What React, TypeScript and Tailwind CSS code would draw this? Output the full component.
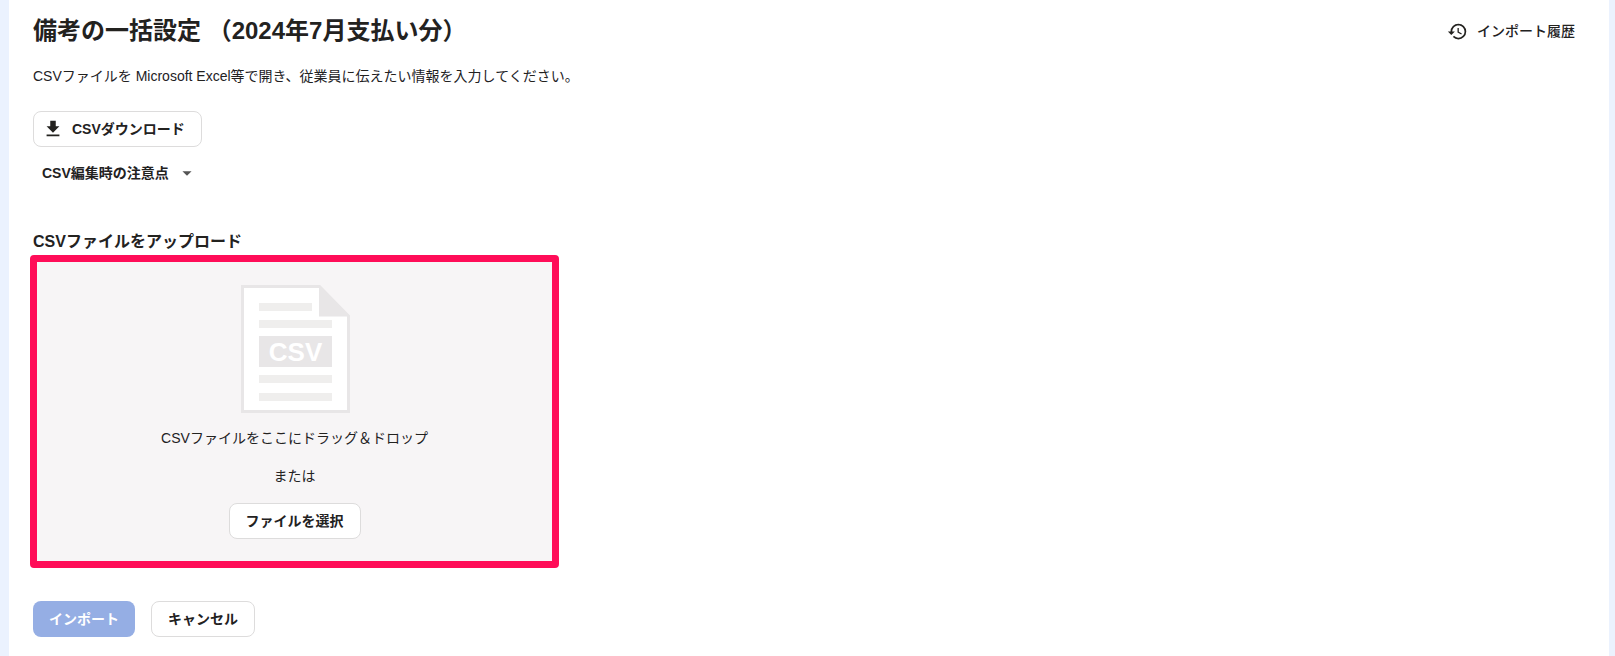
import React from "react";
import { MdHistory, MdFileDownload, MdArrowDropDown } from "react-icons/md";

function CsvIcon() {
  return (
    <svg width="109" height="128" viewBox="0 0 109 128" className="block ml-[2px]">
      <path d="M1.5 1.5H78.5L107.5 31V126.5H1.5Z" fill="#ffffff" stroke="#e8e6e7" strokeWidth="3" />
      <path d="M78 0L109 31.5H78Z" fill="#e8e6e7" />
      <rect x="18" y="18" width="53" height="8" fill="#efeeed" />
      <rect x="18" y="35" width="73" height="8" fill="#efeeed" />
      <rect x="18" y="51" width="73" height="31" fill="#e8e6e7" />
      <text x="54.5" y="76" textAnchor="middle" fontSize="26" fontWeight="700" fill="#ffffff" fontFamily="Liberation Sans, sans-serif">CSV</text>
      <rect x="18" y="90" width="73" height="8" fill="#efeeed" />
      <rect x="18" y="108" width="73" height="8" fill="#efeeed" />
    </svg>
  );
}

export default function App() {
  return (
    <div className="h-[656px] w-full bg-[#ebf2fe] pl-[9px] pr-[6px] overflow-hidden text-[#23221f] [font-family:'Liberation_Sans','Noto_Sans_CJK_JP',sans-serif]">
      <div className="h-full bg-white pl-[24px] pr-[34px]">
        <div className="flex items-center justify-between h-[62px]">
          <h1 className="text-[24px] leading-[32px] font-bold">備考の一括設定 （2024年7月支払い分）</h1>
          <button className="flex items-center gap-[9px] text-[14px] font-medium">
            <MdHistory size={21} />
            <span>インポート履歴</span>
          </button>
        </div>
        <p className="text-[14px] leading-[20px] mt-[4px]">CSVファイルを Microsoft Excel等で開き、従業員に伝えたい情報を入力してください。</p>
        <button className="flex items-center mt-[25px] h-[36px] w-[169px] pl-[8px] bg-white border border-[#dddcdc] rounded-[8px] text-[14px] font-bold">
          <MdFileDownload size={22} />
          <span className="ml-[8px]">CSVダウンロード</span>
        </button>
        <div className="flex items-center mt-[16px] h-[20px] pl-[9px] text-[14px] font-bold">
          <span>CSV編集時の注意点</span>
          <MdArrowDropDown size={22} className="ml-[7px] text-[#555]" />
        </div>
        <h2 className="text-[16px] leading-[20px] font-bold mt-[49px]">CSVファイルをアップロード</h2>
        <div className="mt-[3px] -ml-[3px] w-[529px] h-[313px] border-[7px] border-[#ff0d58] rounded-[4px] bg-[#f7f5f6] flex flex-col items-center pt-[23px]">
          <CsvIcon />
          <p className="text-[14px] leading-[20px] mt-[15px]">CSVファイルをここにドラッグ＆ドロップ</p>
          <p className="text-[14px] leading-[20px] mt-[18px]">または</p>
          <button className="mt-[17px] w-[132px] h-[36px] bg-white border border-[#dddcdc] rounded-[8px] text-[14px] font-bold">ファイルを選択</button>
        </div>
        <div className="flex gap-[16px] mt-[33px]">
          <button className="w-[102px] h-[36px] bg-[#95aee4] text-white rounded-[8px] text-[14px] font-bold">インポート</button>
          <button className="w-[104px] h-[36px] bg-white border border-[#dddcdc] rounded-[8px] text-[14px] font-bold">キャンセル</button>
        </div>
      </div>
    </div>
  );
}
